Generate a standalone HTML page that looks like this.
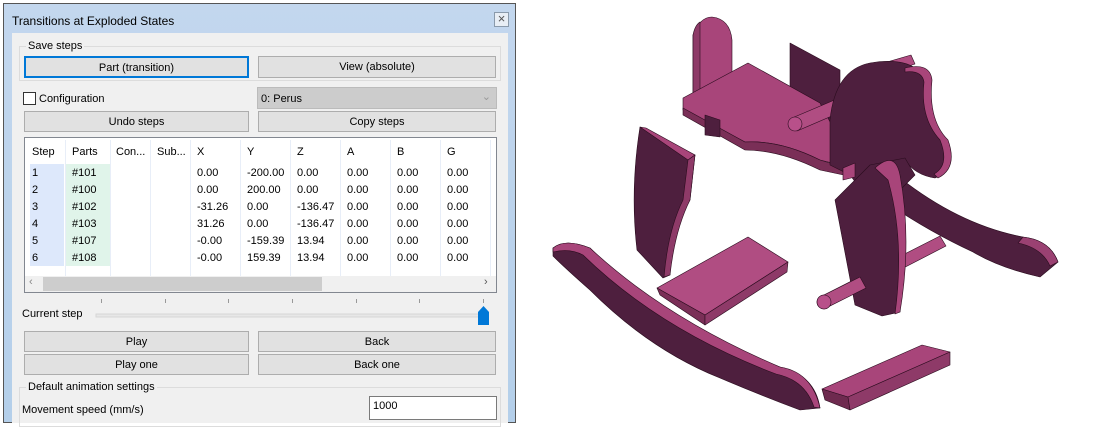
<!DOCTYPE html>
<html><head><style>
*{box-sizing:border-box;margin:0;padding:0}
body{width:1094px;height:415px;background:#fff;position:relative;overflow:hidden;font-family:"Liberation Sans",sans-serif;font-size:11px;color:#000}
.a{position:absolute}
.win{left:3px;top:3px;width:513px;height:420px;border:1px solid #555;background:linear-gradient(#c3d7ee,#b4cfea)}
.content{left:12px;top:33px;width:496px;height:390px;background:#f0f0f0}
.btn{position:absolute;background:#e1e1e1;border:1px solid #adadad;text-align:center;line-height:21px}
.grp{position:absolute;border:1px solid #dcdcdc}
.lbl{position:absolute;background:#f0f0f0;padding:0 2px}
.c{position:absolute;font-size:11px}
</style></head><body>
<div class="a win"></div>
<div class="a" style="left:12px;top:14px;font-size:12px">Transitions at Exploded States</div>
<div class="a" style="left:494px;top:12px;width:15px;height:15px;border:1px solid #8a9aab;background:#e8eef5;text-align:center;line-height:12px;font-size:13px;color:#555">×</div>
<div class="a content"></div>

<div class="grp" style="left:19px;top:46px;width:482px;height:35px"></div>
<div class="lbl" style="left:26px;top:40px">Save steps</div>
<div class="btn" style="left:24px;top:56px;width:225px;height:22px;border:2px solid #0078d7;line-height:20px">Part (transition)</div>
<div class="btn" style="left:258px;top:56px;width:238px;height:22px">View (absolute)</div>

<div class="a" style="left:23px;top:92px;width:13px;height:13px;border:1px solid #333;background:#fff"></div>
<div class="a" style="left:39px;top:93px">Configuration</div>
<div class="a" style="left:257px;top:87px;width:240px;height:22px;background:#ccc;border:1px solid #bbb;padding:5px 3px">0: Perus<span style="position:absolute;right:5px;top:2px;color:#999">&#8964;</span></div>
<div class="btn" style="left:24px;top:111px;width:225px;height:21px;line-height:20px">Undo steps</div>
<div class="btn" style="left:258px;top:111px;width:238px;height:21px;line-height:20px">Copy steps</div>

<div class="a" style="left:24px;top:137px;width:473px;height:156px;border:1px solid #828790;background:#fff"></div>
<div class="a" style="left:30px;top:164px;width:34px;height:102px;background:#dde8fb"></div>
<div class="a" style="left:66px;top:164px;width:44px;height:102px;background:#e0f4ea"></div>
<div class="a" style="left:65px;top:140px;width:1px;height:136px;background:#e8eef8"></div>
<div class="a" style="left:110px;top:140px;width:1px;height:136px;background:#e8eef8"></div>
<div class="a" style="left:150px;top:140px;width:1px;height:136px;background:#e8eef8"></div>
<div class="a" style="left:190px;top:140px;width:1px;height:136px;background:#e8eef8"></div>
<div class="a" style="left:240px;top:140px;width:1px;height:136px;background:#e8eef8"></div>
<div class="a" style="left:290px;top:140px;width:1px;height:136px;background:#e8eef8"></div>
<div class="a" style="left:340px;top:140px;width:1px;height:136px;background:#e8eef8"></div>
<div class="a" style="left:390px;top:140px;width:1px;height:136px;background:#e8eef8"></div>
<div class="a" style="left:440px;top:140px;width:1px;height:136px;background:#e8eef8"></div>
<div class="a" style="left:490px;top:140px;width:1px;height:136px;background:#e8eef8"></div>
<div class="a" style="left:25px;top:276px;width:471px;height:16px;background:#f0f0f0"></div>
<div class="a" style="left:43px;top:277px;width:279px;height:14px;background:#cdcdcd"></div>
<div class="a" style="left:29px;top:276px;color:#888;font-size:11px">&#8249;</div>
<div class="a" style="left:484px;top:276px;color:#555;font-size:11px">&#8250;</div>

<div class="c" style="left:32px;top:146px">Step</div><div class="c" style="left:72px;top:146px">Parts</div><div class="c" style="left:116px;top:146px">Con...</div><div class="c" style="left:157px;top:146px">Sub...</div><div class="c" style="left:197px;top:146px">X</div><div class="c" style="left:247px;top:146px">Y</div><div class="c" style="left:297px;top:146px">Z</div><div class="c" style="left:347px;top:146px">A</div><div class="c" style="left:397px;top:146px">B</div><div class="c" style="left:447px;top:146px">G</div>

<div class="c" style="left:32px;top:165px;line-height:17px">1<br>2<br>3<br>4<br>5<br>6</div>
<div class="c" style="left:72px;top:165px;line-height:17px">#101<br>#100<br>#102<br>#103<br>#107<br>#108</div>
<div class="c" style="left:197px;top:165px;line-height:17px">0.00<br>0.00<br>-31.26<br>31.26<br>-0.00<br>-0.00</div>
<div class="c" style="left:247px;top:165px;line-height:17px">-200.00<br>200.00<br>0.00<br>0.00<br>-159.39<br>159.39</div>
<div class="c" style="left:297px;top:165px;line-height:17px">0.00<br>0.00<br>-136.47<br>-136.47<br>13.94<br>13.94</div>
<div class="c" style="left:347px;top:165px;line-height:17px">0.00<br>0.00<br>0.00<br>0.00<br>0.00<br>0.00</div>
<div class="c" style="left:397px;top:165px;line-height:17px">0.00<br>0.00<br>0.00<br>0.00<br>0.00<br>0.00</div>
<div class="c" style="left:447px;top:165px;line-height:17px">0.00<br>0.00<br>0.00<br>0.00<br>0.00<br>0.00</div>

<svg class="a" style="left:0;top:0" width="520" height="415">
<g stroke="#999" stroke-width="1">
<line x1="101.5" y1="299" x2="101.5" y2="303"/><line x1="165.5" y1="299" x2="165.5" y2="303"/><line x1="228.5" y1="299" x2="228.5" y2="303"/><line x1="292.5" y1="299" x2="292.5" y2="303"/><line x1="356.5" y1="299" x2="356.5" y2="303"/><line x1="419.5" y1="299" x2="419.5" y2="303"/><line x1="483.5" y1="299" x2="483.5" y2="303"/>
</g>
<rect x="96" y="314" width="390" height="3" fill="#e7e7e7" stroke="#d6d6d6"/>
<path d="M478 312 L483.5 306 L489 312 L489 325 L478 325Z" fill="#0078d7"/>
</svg>
<div class="a" style="left:22px;top:308px">Current step</div>

<div class="btn" style="left:24px;top:331px;width:225px;height:21px;line-height:20px">Play</div>
<div class="btn" style="left:258px;top:331px;width:238px;height:21px;line-height:20px">Back</div>
<div class="btn" style="left:24px;top:354px;width:225px;height:21px;line-height:20px">Play one</div>
<div class="btn" style="left:258px;top:354px;width:238px;height:21px;line-height:20px">Back one</div>
<div class="grp" style="left:19px;top:387px;width:482px;height:40px"></div>
<div class="lbl" style="left:26px;top:381px">Default animation settings</div>
<div class="a" style="left:22px;top:404px">Movement speed (mm/s)</div>
<div class="a" style="left:369px;top:396px;width:128px;height:24px;background:#fff;border:1px solid #7a7a7a;padding:3px 3px">1000</div>

<svg class="a" style="left:0;top:0" width="1094" height="415">
<g stroke="#2a0c1e" stroke-width="0.6" stroke-linejoin="round">
<path d="M880 182 L900 178 Q960 225 1023 237 Q1050 240 1058 262 L1040 277 Q1000 268 973 252 Q930 232 890 205Z" fill="#4e1f3e"/>
<path d="M1023 237 Q1050 240 1058 262 L1050 266 Q1042 248 1018 243Z" fill="#9a4172"/>
<path d="M822 296 L940 236 L946 246 L826 308Z" fill="#b04d82"/>
<ellipse cx="824" cy="302" rx="7" ry="7" fill="#b8508a"/>
<path d="M790 43 L840 70 L840 150 L790 128Z" fill="#4e1f3e"/>
<path d="M693 93 L693 35 Q700 17 712 17 Q730 19 732 40 L732 75 L700 93Z" fill="#a8457a"/>
<path d="M693 93 L693 35 Q695 25 700 22 L700 90Z" fill="#8e3a68"/>
<path d="M683 98 L748 63 L820 103 L845 150 L853 168 L820 160 Q780 140 745 142 L683 110Z" fill="#a8457a"/>
<path d="M683 108 L745 142 Q780 140 820 160 L853 170 L853 177 L820 170 Q780 150 745 150 L683 115Z" fill="#7a2f57"/>
<path d="M705 115 L705 135 L720 137 L720 120Z" fill="#4e1f3e"/>
<path d="M792 118 L870 85 L876 97 L797 131Z" fill="#b04d82"/>
<ellipse cx="795" cy="124" rx="7" ry="7" fill="#b8508a"/>
<path d="M887 62 L911 55 L915 64 L890 72Z" fill="#b04d82"/>
<path d="M830 120 Q835 70 870 63 Q900 58 915 68 Q930 68 930 90 Q925 120 945 140 Q955 170 935 178 Q915 175 905 160 L900 200 L880 215 L850 175 L830 165Z" fill="#4e1f3e"/>
<path d="M905 68 Q930 62 932 80 Q928 120 948 140 Q958 168 938 178 L934 174 Q950 165 940 140 Q920 118 924 82 Q922 70 905 72Z" fill="#a8457a"/>
<path d="M870 165 L905 158 L915 175 L900 190 L900 312 L882 316 L855 305 L835 200Z" fill="#4e1f3e"/>
<path d="M875 168 Q895 150 900 175 Q912 240 900 312 L895 314 Q905 240 888 180Z" fill="#a8457a"/>
<path d="M843 168 L855 163 L855 177 L843 180Z" fill="#a8457a"/>
<path d="M822 296 L860 277 L866 288 L826 308Z" fill="#b04d82"/>
<ellipse cx="824" cy="302" rx="7" ry="7" fill="#b8508a"/>
<path d="M640 127 L695 155 L690 200 Q672 230 670 275 L663 278 L637 250 Q630 190 640 127Z" fill="#4e1f3e"/>
<path d="M640 127 L646 128 L695 155 L688 160Z" fill="#a8457a"/>
<path d="M688 160 L695 155 L690 200 Q675 230 670 275 L664 277 Q668 230 683 200Z" fill="#8e3a68"/>
<path d="M657 288 L748 237 L788 262 L705 315Z" fill="#b04d82"/>
<path d="M657 288 L705 315 L705 325 L660 295Z" fill="#7a2f57"/>
<path d="M705 315 L788 262 L787 272 L705 325Z" fill="#8e3a68"/>
<path d="M553 248 Q565 238 590 248 Q660 320 780 367 Q815 375 820 408 L800 410 Q760 395 720 378 Q650 350 590 290 Q565 268 553 256Z" fill="#4e1f3e"/>
<path d="M553 248 Q565 238 590 248 Q665 318 780 367 Q812 372 820 408 L814 407 Q805 380 776 374 Q660 330 583 255 Q570 248 553 252Z" fill="#a8457a"/>
<path d="M822 389 L922 345 L950 352 L848 397Z" fill="#a8457a"/>
<path d="M822 389 L848 397 L850 410 L825 400Z" fill="#6e2a4f"/>
<path d="M848 397 L950 352 L950 365 L850 410Z" fill="#8e3a68"/>
</g>
</svg>
</body></html>
